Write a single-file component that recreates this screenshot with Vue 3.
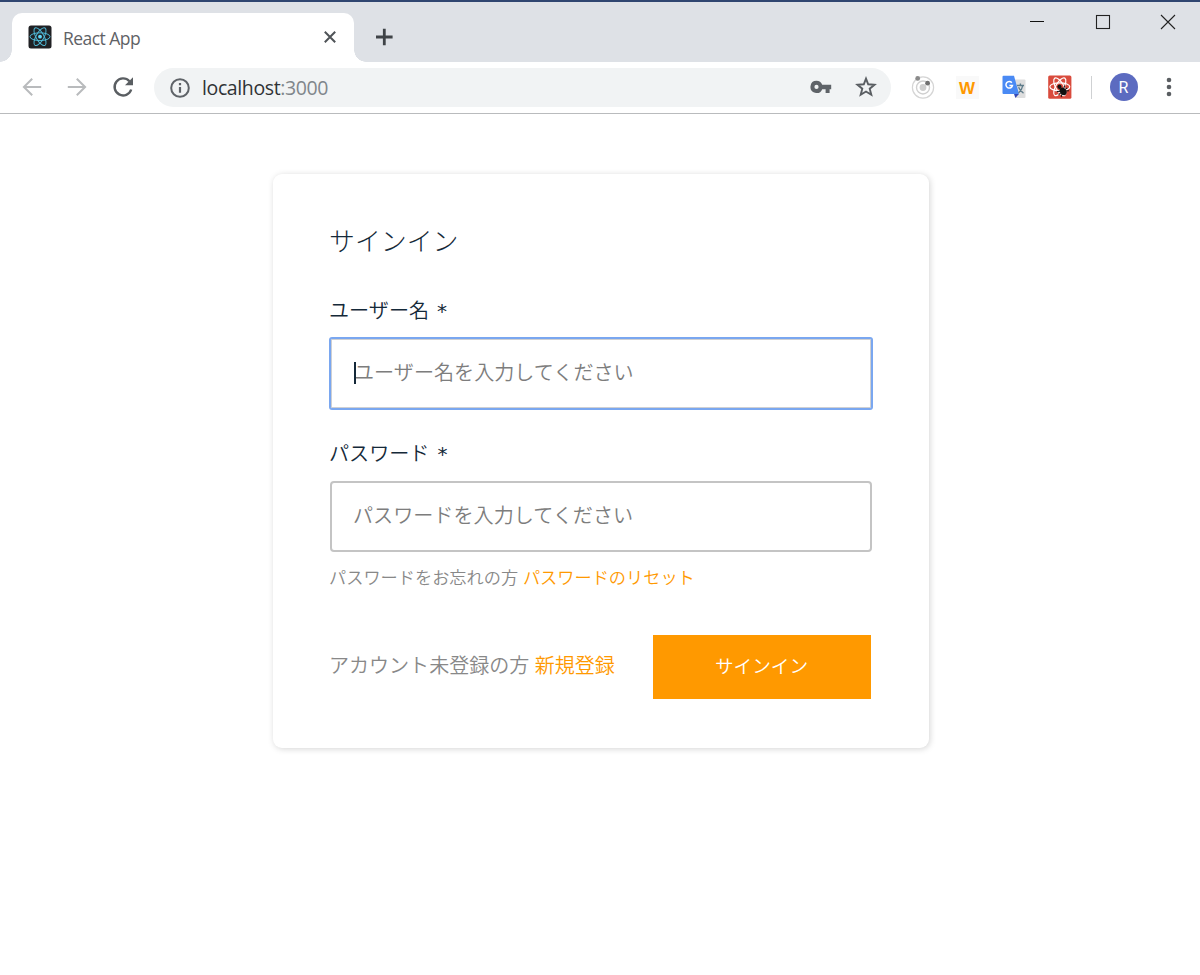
<script setup>
const orbits = [0, 60, 120]
const fields = [
  { id: 'user', label: 'ユーザー名', hint: 'ユーザー名を入力してください', type: 'text', active: true },
  { id: 'pass', label: 'パスワード', hint: 'パスワードを入力してください', type: 'password', active: false },
]
</script>

<template>
  <div class="window">
    <header class="tabstrip">
      <div class="tab">
        <svg class="favicon" width="24" height="24" viewBox="0 0 24 24">
          <rect x=".5" y=".5" width="23" height="23" rx="2.5" fill="#202124" />
          <g fill="none" stroke="#4fb9d6" stroke-width="1">
            <ellipse v-for="a in orbits" :key="a" cx="12" cy="11.7" rx="10" ry="3.9" :transform="`rotate(${a} 12 11.7)`" />
          </g>
          <circle cx="12" cy="11.7" r="1.9" fill="#61dafb" />
        </svg>
        <span class="tab-title">React App</span>
        <svg class="tab-close" width="14" height="14" viewBox="0 0 14 14"><path d="M1.8 1.8 12.2 12.2M12.2 1.8 1.8 12.2" stroke="#4f5357" stroke-width="2" /></svg>
      </div>
      <svg class="plus" width="18" height="18" viewBox="0 0 18 18"><path d="M9.3 .7V17.3M1 9H17.6" stroke="#3f4347" stroke-width="2.8" /></svg>
      <div class="controls">
        <svg width="16" height="16" viewBox="0 0 16 16"><path d="M1 7.5H15" stroke="#111" /></svg>
        <svg width="16" height="16" viewBox="0 0 16 16"><rect x="1.5" y="1.5" width="13" height="13" fill="none" stroke="#222" stroke-width="1.1" /></svg>
        <svg width="16" height="16" viewBox="0 0 16 16"><path d="M1 1 15 15M15 1 1 15" stroke="#222" stroke-width="1.1" /></svg>
      </div>
    </header>

    <nav class="toolbar">
      <div class="nav">
        <svg width="20" height="20" viewBox="0 0 20 20"><path d="M19.2 10H2M10.2 1.7 1.9 10l8.3 8.3" fill="none" stroke="#b9bbbd" stroke-width="2" /></svg>
        <svg width="20" height="20" viewBox="0 0 20 20"><path d="M.8 10H18M9.8 1.7 18.1 10l-8.3 8.3" fill="none" stroke="#b9bbbd" stroke-width="2" /></svg>
        <svg width="22" height="22" viewBox="0 0 22 22">
          <path d="M17.4 5.2A8.5 8.5 0 1 0 19.2 13.5" fill="none" stroke="#5a5e62" stroke-width="2.4" />
          <path d="M21 1.3V9.3H13z" fill="#5a5e62" />
        </svg>
      </div>
      <div class="address">
        <svg class="info" width="20" height="20" viewBox="0 0 20 20">
          <circle cx="10" cy="10" r="8.8" fill="none" stroke="#5f6368" stroke-width="2" />
          <path d="M10 9V14.8M10 5V7.2" stroke="#5f6368" stroke-width="2.2" />
        </svg>
        <span class="url">localhost<i>:3000</i></span>
        <svg class="key" width="22" height="14" viewBox="0 0 22 14">
          <path d="M6.5.8a6.1 6.1 0 1 0 5.7 8.4h3.4v3.9h4V9.2h1.6V4.8h-9A6.1 6.1 0 0 0 6.5.8zm0 4a2.1 2.1 0 1 1 0 4.2 2.1 2.1 0 0 1 0-4.2z" fill="#5f6368" fill-rule="evenodd" />
        </svg>
        <svg class="star" width="22" height="22" viewBox="0 0 22 22">
          <path d="M11 2.7 13.2 8.3 19.5 8.8 14.7 12.7 16.3 18.8 11 15.5 5.7 18.8 7.3 12.7 2.5 8.8 8.8 8.3z" fill="none" stroke="#5a5e62" stroke-width="1.9" />
        </svg>
      </div>
      <div class="extensions">
        <svg width="24" height="24" viewBox="0 0 24 24">
          <circle cx="12" cy="12.5" r="10.6" fill="none" stroke="#d5d5d5" stroke-width="1.2" />
          <circle cx="12" cy="12.5" r="6.5" fill="none" stroke="#d0d0d0" stroke-width="1.4" />
          <circle cx="12" cy="12.5" r="3.4" fill="#cecece" />
          <circle cx="6.7" cy="3.4" r="2.4" fill="#8a8a8a" />
          <circle cx="16.6" cy="8.2" r="2.4" fill="#707070" />
        </svg>
        <span class="wappalyzer">W</span>
        <svg width="24" height="24" viewBox="0 0 24 24">
          <path d="M10 4.5H22.5a1 1 0 0 1 1 1V22a1 1 0 0 1-1 1H14z" fill="#dedede" />
          <path d="M12 19H17L13.4 23z" fill="#3549b5" />
          <path d="M1.5.8H12L17 19H1.5a1 1 0 0 1-1-1V1.8a1 1 0 0 1 1-1z" fill="#4a8af4" />
          <path d="M9.8 7.7A3.3 3.3 0 1 0 10.5 10.4H7.4" fill="none" stroke="#fff" stroke-width="1.5" />
          <path d="M15 10.5H22M18.4 8.6V10.5M20.8 10.5Q20 15 16.5 18M16.6 12.3Q18.3 16.5 21.5 18.2" fill="none" stroke="#607d8b" stroke-width="1.4" />
        </svg>
        <svg width="24" height="24" viewBox="0 0 24 24">
          <rect x=".2" y=".5" width="23.2" height="23.2" rx="1.5" fill="#d94b3d" />
          <g fill="none" stroke="#fff" stroke-width="1.2">
            <ellipse v-for="a in orbits" :key="a" cx="11.8" cy="11.8" rx="10" ry="4" :transform="`rotate(${a} 11.8 11.8)`" />
          </g>
          <g transform="rotate(-38 14 15)">
            <ellipse cx="14" cy="16.8" rx="3" ry="4.1" fill="#111" />
            <circle cx="14" cy="10.9" r="2.1" fill="#111" />
            <path d="M9 13 19 20M19 13 9 20M8.5 16.5H19.5" stroke="#111" stroke-width="1" />
          </g>
        </svg>
        <span class="divider"></span>
        <span class="avatar">R</span>
        <svg class="menu" width="6" height="20" viewBox="0 0 6 20"><g fill="#5a5e62"><circle cx="3" cy="3" r="2.3" /><circle cx="3" cy="10" r="2.3" /><circle cx="3" cy="17" r="2.3" /></g></svg>
      </div>
    </nav>

    <main class="page">
      <form class="card" @submit.prevent>
        <h1>サインイン</h1>
        <div v-for="f in fields" :key="f.id" class="field">
          <label :for="f.id">{{ f.label }}<span class="required">*</span></label>
          <div class="input-box" :class="{ active: f.active }">
            <input :id="f.id" :type="f.type" :placeholder="f.hint">
            <span v-if="f.active" class="caret"></span>
          </div>
        </div>
        <p class="reset">パスワードをお忘れの方 <a>パスワードのリセット</a></p>
        <div class="actions">
          <p>アカウント未登録の方 <a>新規登録</a></p>
          <button type="submit">サインイン</button>
        </div>
      </form>
    </main>
  </div>
</template>

<style>
body { margin: 0; background: #fff; }
</style>

<style scoped>
* { box-sizing: border-box; }
.window { width: 1200px; height: 975px; overflow: hidden; background: #fff; font-family: "Noto Sans", "Noto Sans CJK JP", sans-serif; }
svg { display: block; flex: none; }
.tabstrip { height: 62px; display: flex; align-items: flex-start; background: #dee1e6; border-top: 2px solid #2f4570; }
.tab { position: relative; width: 342px; height: 49px; margin: 11px 0 0 12px; padding: 0 17px 2px 16px; display: flex; align-items: center; background: #fff; border-radius: 10px 10px 0 0; }
.tab::before, .tab::after { content: ""; position: absolute; bottom: 0; width: 12px; height: 12px; }
.tab::before { right: 100%; background: radial-gradient(circle at 0 0, transparent 11.5px, #fff 12px); }
.tab::after { left: 100%; background: radial-gradient(circle at 100% 0, transparent 11.5px, #fff 12px); }
.tab-title { margin-left: 11px; padding-top: 3px; font: 17.5px "Open Sans", sans-serif; letter-spacing: -.55px; color: #5f6266; }
.tab-close { margin-left: auto; }
.plus { margin: 26px 0 0 21px; }
.controls { display: flex; gap: 49.5px; margin: 12px 24px 0 auto; }
.toolbar { height: 52px; display: flex; align-items: center; border-bottom: 1px solid #b9bbbd; }
.nav { width: 154px; padding: 0 0 2px 21.5px; display: flex; align-items: center; gap: 25px; }
.address { width: 737px; height: 39px; padding: 0 14px 0 16px; display: flex; align-items: center; background: #f1f3f4; border-radius: 20px; }
.url { margin-left: 12px; font: 19.5px "Open Sans", sans-serif; letter-spacing: -.38px; color: #2f3235; }
.url i { font-style: normal; color: #80868b; }
.key { margin: 0 -0.5px 2px auto; }
.star { margin: 0 0 1px 24px; }
.extensions { display: flex; align-items: center; margin: 0 0 1px 19.5px; }
.extensions > * { flex: none; }
.wappalyzer { width: 23px; height: 23px; margin: 0 23px 0 21px; padding-top: 3px; display: grid; place-items: center; background: #f9f9f9; color: #ff9800; font: bold 17px "Liberation Sans", sans-serif; }
.extensions svg + svg { margin-left: 22px; }
.divider { width: 1px; height: 23px; margin: 0 18px 0 19px; background: #cfd1d3; }
.avatar { width: 28px; height: 28px; margin-right: 1px; padding-top: 1px; display: grid; place-items: center; border-radius: 50%; background: #5c6bc0; color: #fff; font: 16px Roboto, sans-serif; }
.menu { margin: 0 0 1px 27.5px; }
.page { padding-top: 60px; color: #152939; font-family: "Noto Sans CJK JP DemiLight", "Noto Sans CJK JP", sans-serif; font-weight: 350; }
.card { width: 656px; height: 574px; margin: 0 auto 0 273px; padding: 49px 57px 49px; display: flex; flex-direction: column; border-radius: 9px; background: #fff; box-shadow: 1px 1px 6px rgba(0, 0, 0, .17); }
h1 { margin: -1px 0 33px -1px; font-family: "Noto Sans CJK JP Light", "Noto Sans CJK JP", sans-serif; font-size: 25.9px; line-height: 36px; font-weight: 300; }
.field { margin-bottom: 26px; }
.field + .field { margin-bottom: 0; }
.field + .field label { margin-top: -2px; height: 48px; }
label { display: block; font-size: 20.1px; line-height: 40px; height: 48px; margin: -1px 0 0 -1px; }
.required { margin-left: 8px; font: 20px/20px "DejaVu Sans", sans-serif; }
.input-box { position: relative; width: 542px; height: 71px; }
input { display: block; width: 100%; height: 100%; padding: 0 21px 5px; border: 2px solid #c4c4c4; border-radius: 4px; background: #fff; font: inherit; font-size: 20.1px; outline: 0; }
input::placeholder { color: #7d7d7d; opacity: 1; }
.active input { border: 1px solid #7aa7f0; padding: 0 23px 5px; border-radius: 2px; box-shadow: inset 0 0 0 1px #cfd0d3, 0 0 0 1px #7aa7f0; }
.caret { position: absolute; left: 24px; top: 24px; width: 2px; height: 22px; background: #152939; }
p { margin: 0 0 0 -1px; color: #888; white-space: nowrap; }
a { color: #f90; margin-left: 1px; }
.reset { margin-top: 13px; font-size: 17.2px; line-height: 24px; }
.actions { margin-top: auto; display: flex; align-items: center; justify-content: space-between; }
.actions p { font-size: 20.05px; padding-bottom: 6px; }
button { width: 218px; height: 64px; margin-right: 1px; padding: 0 1px 5px 0; border: 0; background: #f90; color: #fff; font: inherit; font-size: 18.6px; }
</style>
